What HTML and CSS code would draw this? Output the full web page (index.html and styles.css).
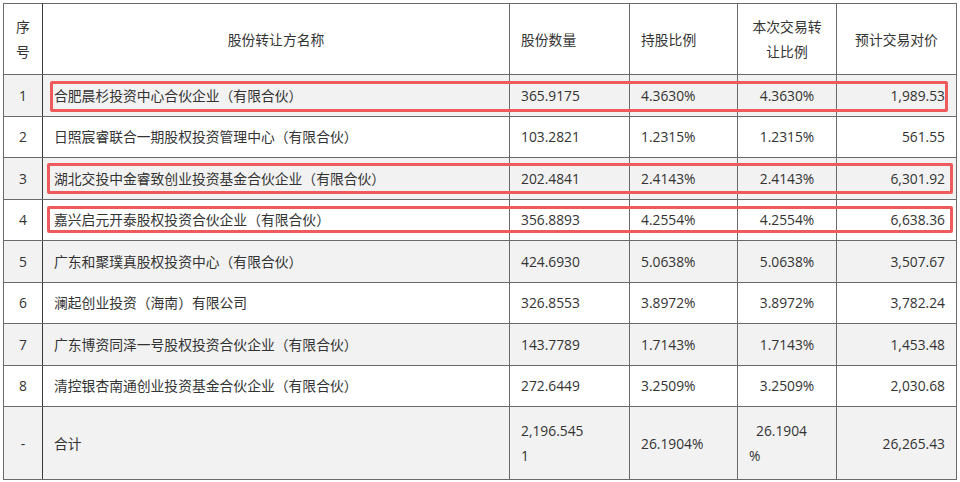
FILE: index.html
```html
<!DOCTYPE html>
<html lang="zh-CN">
<head>
<meta charset="utf-8">
<link rel="stylesheet" href="styles.css">
</head>
<body>
<div class="wrap">
  <table class="tbl">
    <colgroup>
      <col class="c1"><col class="c2"><col class="c3"><col class="c4"><col class="c5"><col class="c6">
    </colgroup>
    <thead>
      <tr class="head">
        <th class="ctr">序<br>号</th>
        <th class="ctr">股份转让方名称</th>
        <th class="lft">股份数量</th>
        <th class="lft">持股比例</th>
        <th class="ctr">本次交易转<br>让比例</th>
        <th class="ctr">预计交易对价</th>
      </tr>
    </thead>
    <tbody>
      <tr class="grey"><td class="ctr">1</td><td>合肥晨杉投资中心合伙企业（有限合伙）</td><td>365.9175</td><td>4.3630%</td><td class="ctr">4.3630%</td><td class="rgt">1,989.53</td></tr>
      <tr><td class="ctr">2</td><td>日照宸睿联合一期股权投资管理中心（有限合伙）</td><td>103.2821</td><td>1.2315%</td><td class="ctr">1.2315%</td><td class="rgt">561.55</td></tr>
      <tr class="grey"><td class="ctr">3</td><td>湖北交投中金睿致创业投资基金合伙企业（有限合伙）</td><td>202.4841</td><td>2.4143%</td><td class="ctr">2.4143%</td><td class="rgt">6,301.92</td></tr>
      <tr><td class="ctr">4</td><td>嘉兴启元开泰股权投资合伙企业（有限合伙）</td><td>356.8893</td><td>4.2554%</td><td class="ctr">4.2554%</td><td class="rgt">6,638.36</td></tr>
      <tr class="grey"><td class="ctr">5</td><td>广东和聚璞真股权投资中心（有限合伙）</td><td>424.6930</td><td>5.0638%</td><td class="ctr">5.0638%</td><td class="rgt">3,507.67</td></tr>
      <tr><td class="ctr">6</td><td>澜起创业投资（海南）有限公司</td><td>326.8553</td><td>3.8972%</td><td class="ctr">3.8972%</td><td class="rgt">3,782.24</td></tr>
      <tr class="grey"><td class="ctr">7</td><td>广东博资同泽一号股权投资合伙企业（有限合伙）</td><td>143.7789</td><td>1.7143%</td><td class="ctr">1.7143%</td><td class="rgt">1,453.48</td></tr>
      <tr><td class="ctr">8</td><td>清控银杏南通创业投资基金合伙企业（有限合伙）</td><td>272.6449</td><td>3.2509%</td><td class="ctr">3.2509%</td><td class="rgt">2,030.68</td></tr>
      <tr class="grey total"><td class="ctr">-</td><td>合计</td><td>2,196.545<br>1</td><td>26.1904%</td><td><span class="ind">26.1904</span><br>%</td><td class="rgt">26,265.43</td></tr>
    </tbody>
  </table>
  <div class="mark m1"></div>
  <div class="mark m3"></div>
  <div class="mark m4"></div>
</div>
</body>
</html>
```

FILE: styles.css
```css
html, body {
  margin: 0;
  padding: 0;
  background: #ffffff;
}
body {
  font-family: "Open Sans", "Noto Sans CJK SC", sans-serif;
  font-size: 13.8px;
  color: #333333;
}
.wrap {
  position: relative;
  padding: 3px 0 0 3px;
}
.tbl {
  border-collapse: collapse;
  table-layout: fixed;
  width: 953px;
  border: 1px solid #8a8a8a;
}
.c1 { width: 39px; }
.c2 { width: 467px; }
.c3 { width: 120px; }
.c4 { width: 108px; }
.c5 { width: 99px; }
.c6 { width: 120px; }
.tbl th, .tbl td {
  border: 1px solid #6a6a6a;
  padding: 0 11px;
  font-weight: normal;
  line-height: 25px;
  vertical-align: middle;
  text-align: left;
  white-space: nowrap;
  overflow: visible;
}
.tbl td:first-child, .tbl th:first-child {
  border-right: 1px solid #3a3a3a;
  padding: 0;
}
.tbl .ctr { text-align: center; }
.tbl .rgt { text-align: right; }
.head { height: 71px; }
.head th { line-height: 25px; }
.tbl tbody tr { height: 41.5px; }
.tbl tbody tr.total { height: 73px; }
.grey { background: #f2f2f2; }
.ind { padding-left: 7px; }
.mark {
  position: absolute;
  border: 3px solid #ef5a5c;
  border-radius: 2px;
  box-sizing: border-box;
}
.m1 { left: 50px; top: 81px; width: 898px; height: 31px; }
.m3 { left: 47px; top: 163px; width: 906px; height: 31px; }
.m4 { left: 47px; top: 206px; width: 906px; height: 27px; }
```
